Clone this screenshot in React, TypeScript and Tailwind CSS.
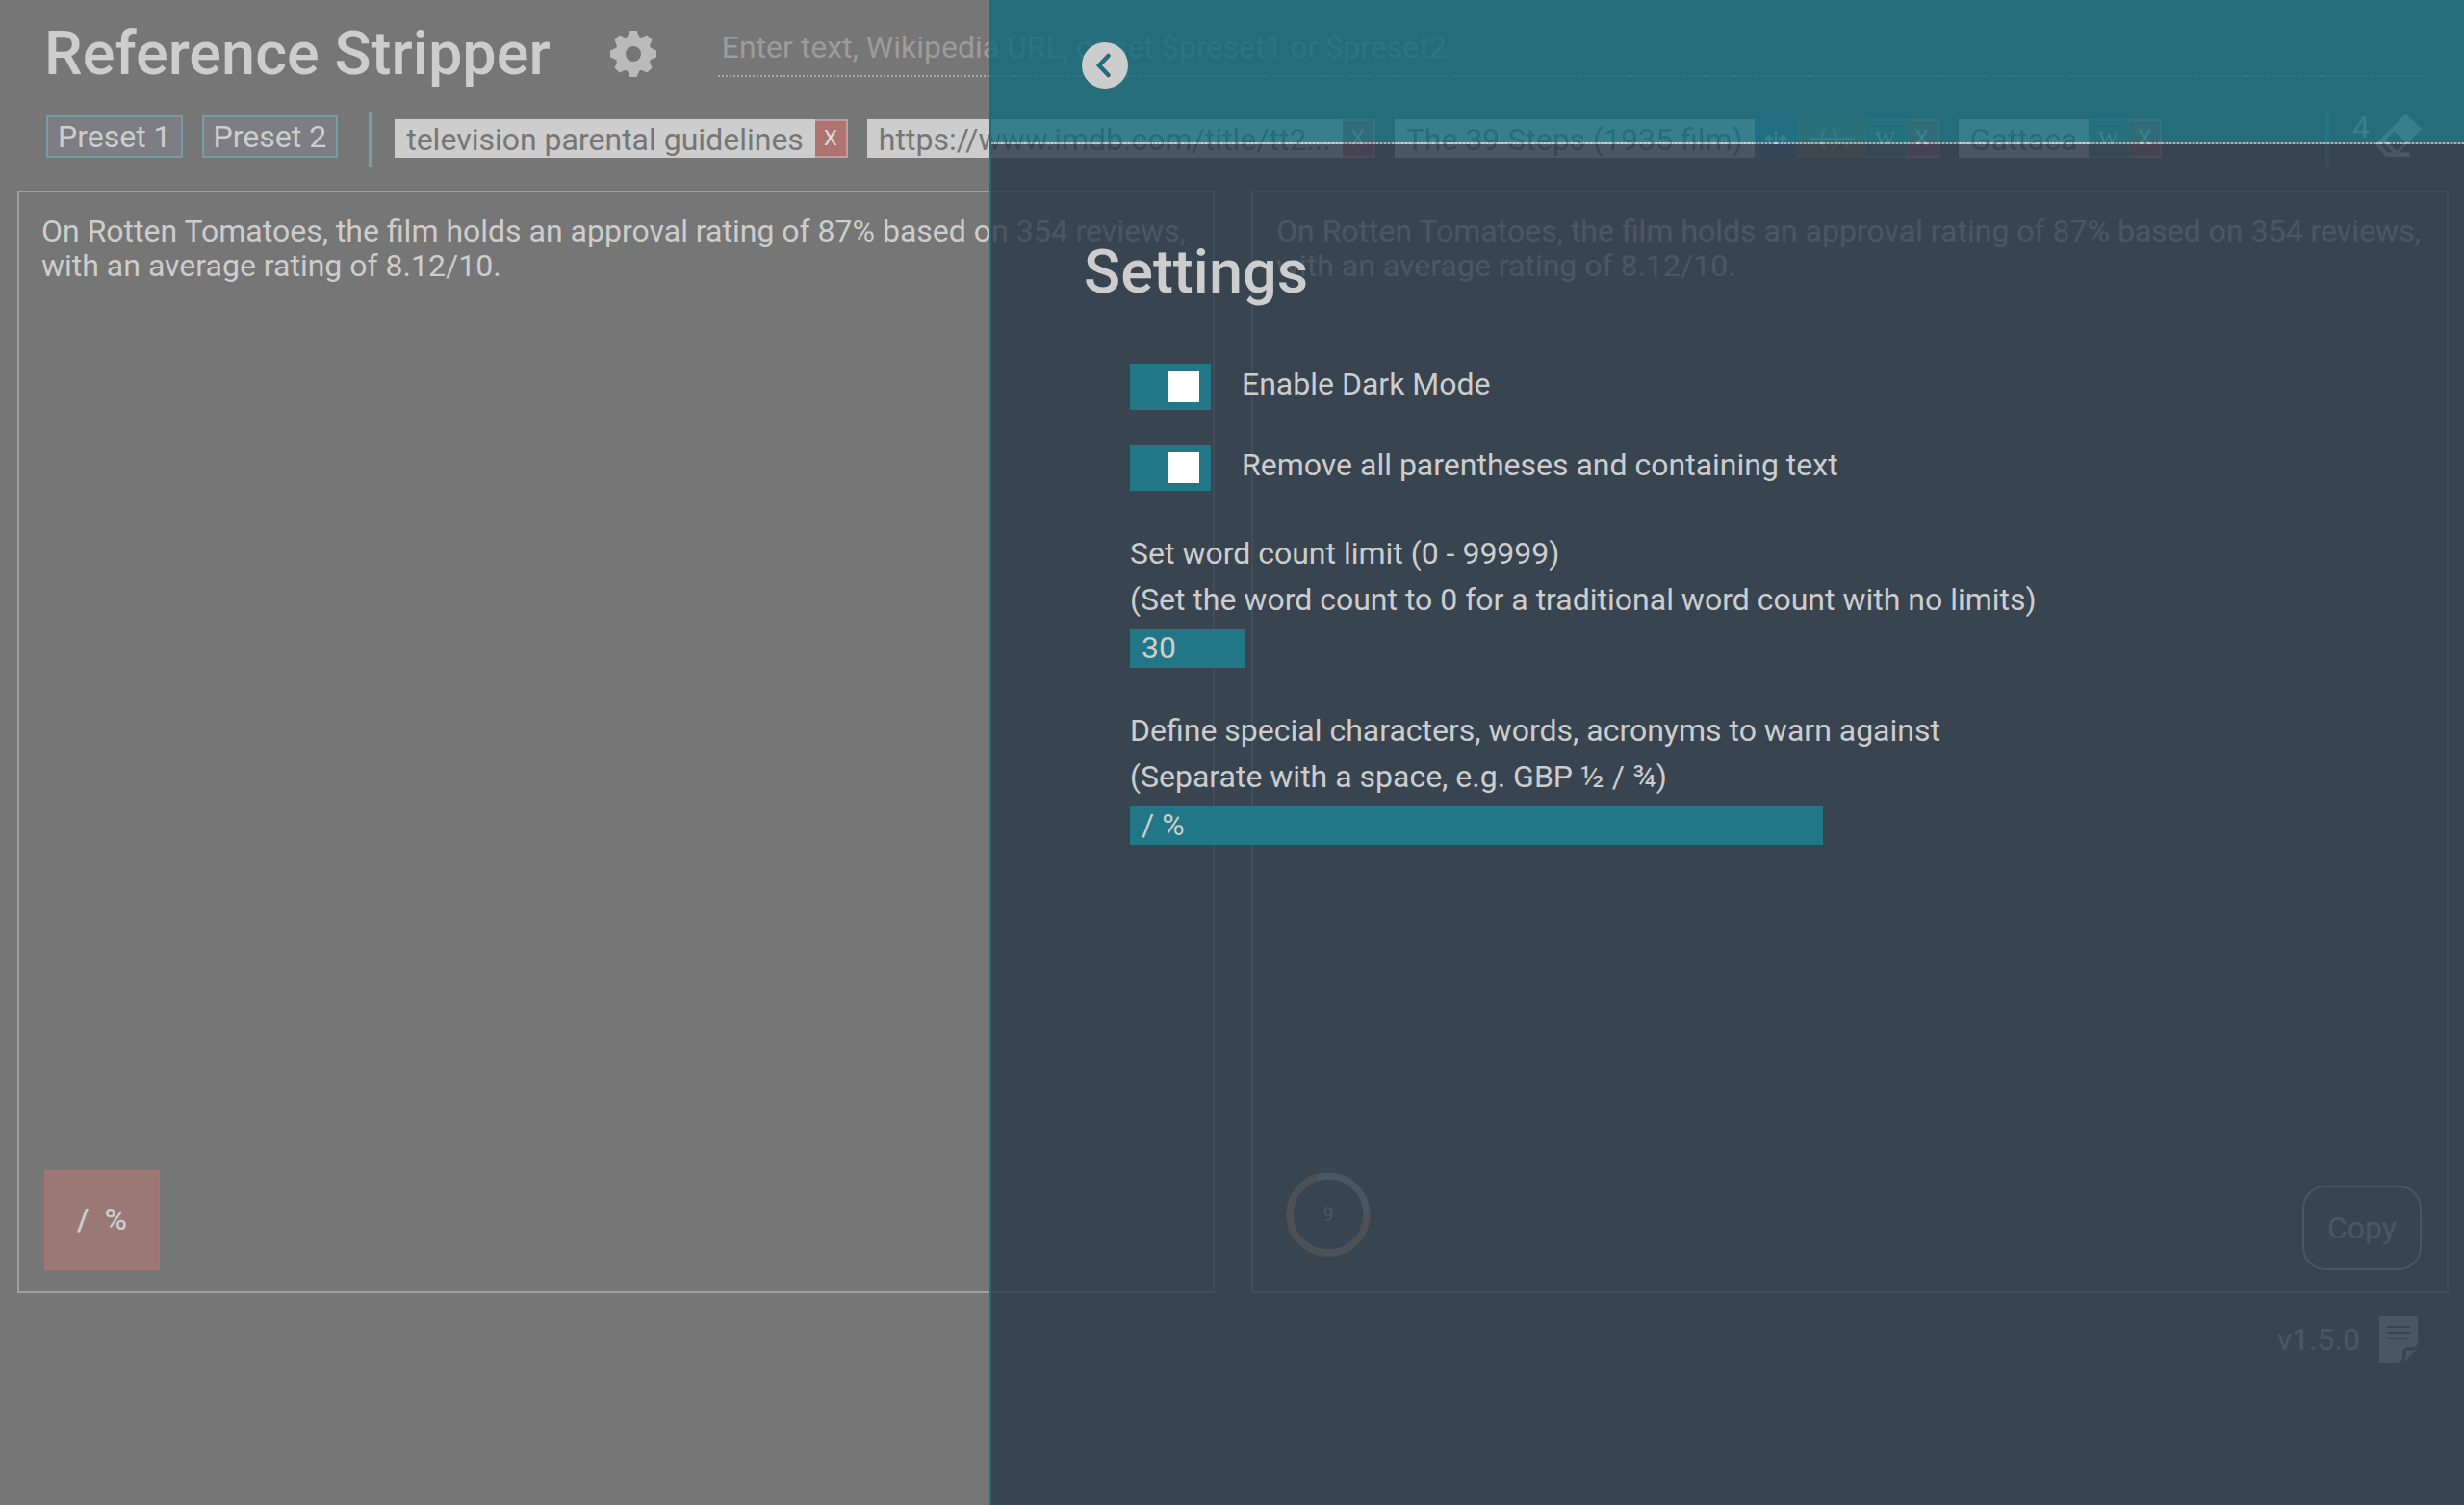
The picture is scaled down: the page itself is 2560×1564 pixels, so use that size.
import React from "react";

const GEAR_ANGLES = [0, 45, 90, 135, 180, 225, 270, 315];

function GearIcon() {
  return (
    <svg viewBox="-24 -24 48 48" className="size-12" fill="none" stroke="none">
      <circle r="13" stroke="currentColor" strokeWidth="10" />
      {GEAR_ANGLES.map((a) => (
        <path key={a} transform={`rotate(${a})`} fill="currentColor" d="M-3.600-24H3.600L5-20.500Q6.300-15.200 10.960-18L7-12H-7L-6.700-17.100Q-5.500-18.500-5-20.500Z" />
      ))}
    </svg>
  );
}

function RemoveButton() {
  return (
    <button aria-label="Remove" className="flex w-[34px] items-center justify-center border-2 border-l-0 border-[#c49c9a] bg-[#af7470] text-[22px] leading-none text-[#dcdcdc]">X</button>
  );
}

function WikiButton() {
  return (
    <button aria-label="Wikipedia" className="flex w-[42px] items-center justify-center border-2 border-l-0 border-[#769ca3] bg-[#6d8084] font-['Liberation_Serif',serif] text-[22px] leading-none text-[#e4e4e4]">W</button>
  );
}

function Tag({ label, children }: { label: string; children?: React.ReactNode }) {
  return (
    <div className="flex h-10 shrink-0 bg-[#cdcdcd] text-[#767676]">
      <span className="px-3 leading-[42px] whitespace-pre">{label}</span>
      {children}
      <RemoveButton />
    </div>
  );
}

function Excerpt() {
  return (
    <p className="leading-9">
      On Rotten Tomatoes, the film holds an approval rating of 87% based on 354 reviews, with an average rating of 8.12/10.
    </p>
  );
}

function Toggle({ id, label }: { id: string; label: string }) {
  return (
    <div className="flex h-12 items-center">
      <input id={id} type="checkbox" defaultChecked className="peer sr-only" />
      <label htmlFor={id} className="flex items-start gap-8">
        <span className="flex h-12 w-[84px] items-center justify-end bg-[#217786] pr-3">
          <span className="size-8 bg-white" />
        </span>
        <span className="leading-[42px]">{label}</span>
      </label>
    </div>
  );
}

export default function App() {
  return (
    <div className="relative h-screen min-h-[1440px] overflow-hidden bg-[#767676] font-[Roboto,sans-serif] text-[32px] text-[#cdcdcd]">
      <div className="flex items-start pt-4 pr-11 pl-[46px]">
        <h1 className="text-[63px] leading-[80px] font-medium">Reference Stripper</h1>
        <button aria-label="Settings" className="mt-4 ml-[62px] text-[#bababa]">
          <GearIcon />
        </button>
        <input
          aria-label="Text or URL"
          placeholder="Enter text, Wikipedia URL, or set $preset1 or $preset2"
          className="ml-16 h-16 min-w-0 flex-1 border-b-2 border-dotted border-[#a9a9a9] bg-transparent px-1 pt-1 outline-none placeholder:text-[#9c9c9c]"
        />
      </div>

      <div className="mt-5 flex h-[58px] items-center pr-11 pl-12">
        <div className="flex gap-5 pb-1.5">
          <button className="h-11 border-2 border-[#739ea7] bg-[#7c7e84] px-2.5 leading-10">Preset 1</button>
          <button className="h-11 border-2 border-[#739ea7] bg-[#7c7e84] px-2.5 leading-10">Preset 2</button>
        </div>
        <div className="ml-8 h-[58px] w-1 bg-[#739ea7]" />
        <div className="ml-[23px] flex flex-1 gap-5 pb-[2px]">
          <Tag label="television parental guidelines" />
          <Tag label="https://www.imdb.com/title/tt2..." />
          <Tag label="The 39 Steps (1935 film)">
            <button aria-label="Split" className="flex w-11 items-center justify-center bg-[#5f7f9a] text-[#d4d4d4]">
              <svg viewBox="0 0 24 14" className="h-3.5 w-6" fill="currentColor"><path d="M11 0h2v14h-2zM0 7l6-5v3.500h3v3H6V12zM24 7l-6-5v3.500h-3v3h3V12z" /></svg>
            </button>
            <button aria-label="Remove parentheses" className="flex w-[72px] items-center justify-center border-2 border-[#8c8c78] bg-[#89816c] text-[22px] leading-none whitespace-pre text-[#c4c4c4] line-through">{"\u00a0\u00a0(\u00a0)\u00a0,\u00a0"}</button>
            <WikiButton />
          </Tag>
          <Tag label="Gattaca"><WikiButton /></Tag>
        </div>
        <div className="h-[58px] w-1 bg-[#739ea7]" />
        <span className="ml-6 self-start leading-8">4</span>
        <button aria-label="Clear" className="ml-1.5 self-start pt-0.5">
          <svg viewBox="0 0 48 45" className="h-[45px] w-12" fill="currentColor"><path d="M31.500 0 48 16 24.500 40.500H36V45H11L0 32zM19.500 18 11 27 22 39.500 31 29.500zM8 29.500 5 32.500 12.500 40.500H18z" fillRule="evenodd" /></svg>
        </button>
      </div>

      <div className="mt-6 grid grid-cols-2 gap-[38px] pr-4 pl-[18px]">
        <section className="flex h-[1146px] flex-col justify-between border-2 border-[#a1a1a1] px-[23px] pt-[22px] pb-[22px]">
          <Excerpt />
          <div className="ml-[3px] flex h-[104px] w-[120px] items-center justify-center border-2 border-[#aa7474] bg-[#997876] pb-0.5 text-[32px] font-medium whitespace-pre">/  %</div>
        </section>
        <section className="flex h-[1146px] flex-col justify-between border-2 border-[#a1a1a1] px-6 pt-[22px] pb-[22px]">
          <Excerpt />
          <div className="flex items-start justify-between pr-0.5 pl-2.5">
            <div className="relative flex size-[88px] items-center justify-center text-xl">
              <svg viewBox="0 0 88 88" className="absolute inset-0" fill="none" strokeWidth="7">
                <circle cx="44" cy="44" r="40" stroke="#cdcdcd" />
                <path d="M84 44A40 40 0 1 1 32 6" stroke="#d8b090" />
              </svg>
              9
            </div>
            <button className="mt-3.5 h-[88px] w-[124px] rounded-3xl border-2">Copy</button>
          </div>
        </section>
      </div>

      <div className="mt-6 flex items-center justify-end gap-5 pr-12">
        <span>v1.5.0</span>
        <button aria-label="Release notes">
          <svg viewBox="0 0 40 48" className="h-12 w-10" fill="currentColor"><path d="M0 0h40v27q0 5-5 5h-5q-6 0-6 6v3q0 7-6 7H0zM8 10v2h24v-2zm0 6v2h24v-2zm0 6v2h24v-2z" fillRule="evenodd" /><path d="M28 36q7 0 11-2L26 47q2-5 2-11z" /></svg>
        </button>
      </div>

      <aside className="absolute inset-y-0 right-0 left-[1028px] flex flex-col border-l-2 border-[#266a78]">
        <header className="flex h-[150px] border-b-2 border-dotted border-[#a2b7bd] bg-[#116b7c]/80 bg-clip-padding px-[94px] pt-11">
          <button aria-label="Close settings" className="flex size-12 items-center justify-center rounded-full bg-[#cdcdcd] text-[#256d7b]">
            <svg viewBox="0 0 48 48" className="size-12" fill="none" stroke="currentColor" strokeWidth="4.5" strokeLinecap="round"><path d="M27.500 14 18 24l9.500 10" /></svg>
          </button>
        </header>
        <div className="flex-1 bg-[#2a3848]/80 px-24 pt-[93px]">
          <h2 className="text-[63px] leading-[80px] font-medium">Settings</h2>
          <div className="flex flex-col pt-[55px] pl-12">
            <Toggle id="dark" label="Enable Dark Mode" />
            <div className="h-9" />
            <Toggle id="parens" label="Remove all parentheses and containing text" />
            <label htmlFor="limit" className="mt-[41px] leading-[48px]">
              Set word count limit (0 - 99999)<br />(Set the word count to 0 for a traditional word count with no limits)
            </label>
            <input id="limit" defaultValue="30" className="mt-[7px] h-10 w-[120px] bg-[#217786] px-3 pb-0.5 outline-none" />
            <label htmlFor="special" className="mt-[41px] leading-[48px]">
              Define special characters, words, acronyms to warn against<br />(Separate with a space, e.g. GBP ½ / ¾)
            </label>
            <input id="special" defaultValue="/ %" className="mt-[7px] h-10 w-[720px] bg-[#217786] px-3 pb-0.5 outline-none" />
          </div>
        </div>
      </aside>
    </div>
  );
}
